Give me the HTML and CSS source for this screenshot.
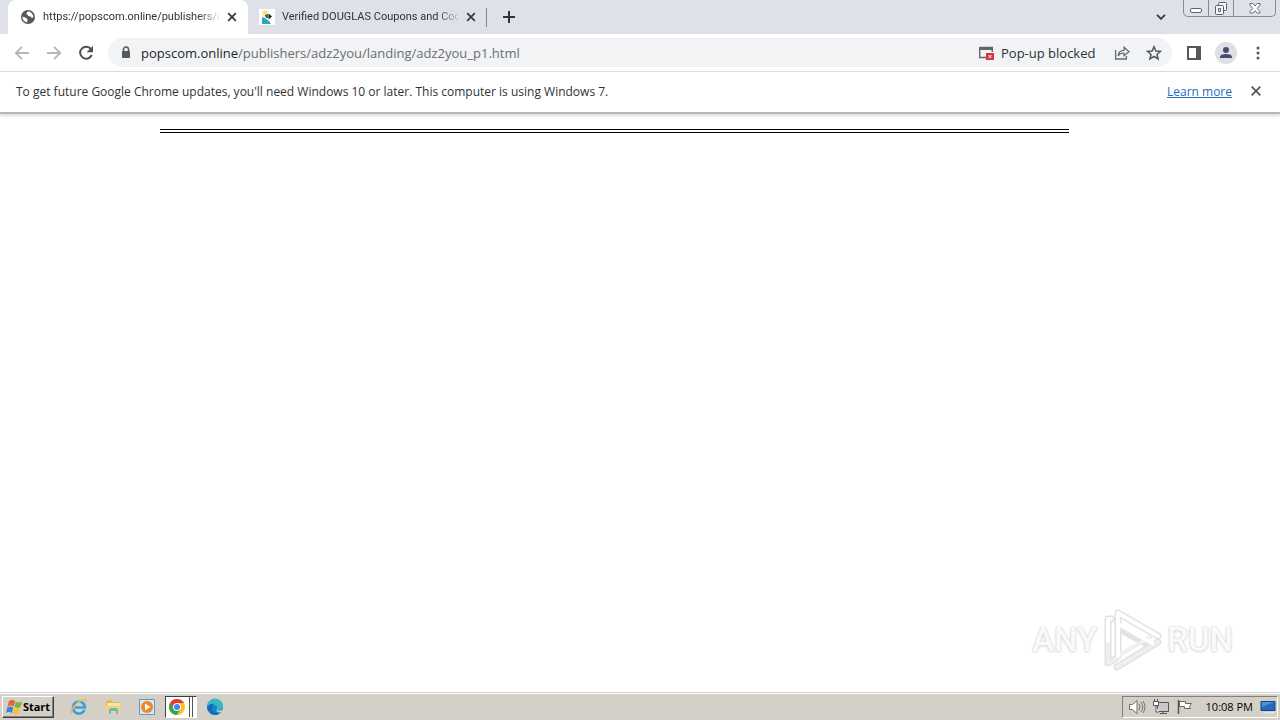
FILE: index.html
```html
<!DOCTYPE html>
<html lang="en">
<head>
<meta charset="utf-8">
<meta name="viewport" content="width=device-width, initial-scale=1">
<title>popscom.online</title>
<link rel="stylesheet" href="styles.css">
</head>
<body>
<div class="desktop">
  <header class="tabstrip">
    <div class="tab tab-active">
      <svg class="icon16" viewBox="0 0 16 16"><circle cx="8" cy="8" r="7" fill="#54575b"/><path d="M2.300 7.500l3.500 1.200 1.600 1.600v3.200C4.500 13 2.300 11 2.300 7.500zM7.500 2.500c3 0 5.500 2 6 5.500l-1.500 1-1.500-1.500-2.500-.5V6L6.200 5z" fill="#fff"/></svg>
      <span class="tab-title">https://popscom.online/publishers/a</span>
      <button class="tab-close" aria-label="Close tab"><svg viewBox="0 0 10 10"><path d="M1.200 1.200l7.600 7.600M8.800 1.200L1.200 8.800" stroke="#35383c" stroke-width="1.700"/></svg></button>
    </div>
    <div class="tab">
      <svg class="icon16" viewBox="0 0 16 16"><path fill="#fff" d="M0 0h16v16H0z"/><path d="M3 3q3-4 6 0l-1 4-3 1z" fill="#f1e48e"/><path d="M3 8l3 1 4 3 2 3H3z" fill="#28aab1"/><path d="M6 6l3-1v4H7z" fill="#52525a"/><path d="M9.500 4.500l3.500 3-3.500 3z" fill="#171c24"/></svg>
      <span class="tab-title">Verified DOUGLAS Coupons and Cod</span>
      <button class="tab-close" aria-label="Close tab"><svg viewBox="0 0 10 10"><path d="M1.200 1.200l7.600 7.600M8.800 1.200L1.200 8.800" stroke="#35383c" stroke-width="1.700"/></svg></button>
    </div>
    <button class="new-tab" aria-label="New tab"><svg viewBox="0 0 12 12"><path d="M6 0v12M0 6h12" stroke="#303338" stroke-width="2"/></svg></button>
    <button class="tab-search" aria-label="Search tabs"><svg viewBox="0 0 10 6"><path d="M1 .8l4 4 4-4" fill="none" stroke="#35383c" stroke-width="1.800"/></svg></button>
    <div class="caption">
      <button class="cap" aria-label="Minimize"><svg width="12" height="17" viewBox="0 0 12 17"><rect x=".5" y="8.500" width="11" height="4" rx="1.500" fill="#fff" stroke="#5c6070"/></svg></button>
      <button class="cap" aria-label="Restore"><svg width="14" height="17" viewBox="0 0 14 17"><rect x="4.500" y="2.500" width="8" height="8" rx="1" fill="#f4f5f7" stroke="#5c6070"/><rect x="1.500" y="5.500" width="8" height="9" rx="1" fill="#f4f5f7" stroke="#5c6070"/><path d="M4.500 8.500h2v3h-2z" fill="none" stroke="#5c6070"/></svg></button>
      <button class="cap cap-close" aria-label="Close"><svg width="12" height="17" viewBox="0 0 12 17"><path d="M1 3.500h3l2 2.500 2-2.500h3v1.500L8.300 8.500 11 11.500V13H8L6 10.700 4 13H1v-1.500l2.700-3L1 5z" fill="#fff" stroke="#6b6f7d"/></svg></button>
    </div>
  </header>

  <nav class="toolbar">
    <button class="nav-btn" aria-label="Back"><svg viewBox="0 0 16 16"><path d="M15 8H2M8 1.800L1.800 8 8 14.200" fill="none" stroke="#b4b6b9" stroke-width="1.800"/></svg></button>
    <button class="nav-btn" aria-label="Forward"><svg viewBox="0 0 16 16"><path d="M1 8h13M8 1.800L14.200 8 8 14.200" fill="none" stroke="#b4b6b9" stroke-width="1.800"/></svg></button>
    <button class="nav-btn" aria-label="Reload"><svg viewBox="0 0 16 16"><path d="M13 4.200A6 6 0 1 0 13.700 10" fill="none" stroke="#4f5256" stroke-width="2"/><path d="M15 .8v6.400H8.600z" fill="#4f5256"/></svg></button>
    <div class="omnibox">
      <svg class="lock" viewBox="0 0 10 13"><path d="M2.500 6V3.500a2.500 2.500 0 0 1 5 0V6" fill="none" stroke="#54575b" stroke-width="1.500"/><rect x="1" y="5" width="8" height="7" rx="1" fill="#54575b"/></svg>
      <a class="url" href="#page"><span class="host">popscom.online</span>/publishers/adz2you/landing/adz2you_p1.html</a>
      <button class="popup"><svg class="icon16" viewBox="0 0 16 16"><path d="M1.700 2.500h12.600V7M8 12.500H1.700v-10" fill="none" stroke="#62656a" stroke-width="1.400"/><path d="M1 2h14v3H1z" fill="#62656a"/><path d="M8 8h8v7H8z" fill="#d4373b"/><path d="M10.500 10l3 3M13.500 10l-3 3" stroke="#fff"/></svg>Pop-up blocked</button>
      <button class="omni-btn" aria-label="Share"><svg class="icon16" viewBox="0 0 16 16"><path d="M1.600 5v9h10.800v-3" fill="none" stroke="#66696d" stroke-width="1.300"/><path d="M4 11c.5-4 2.500-5.500 6-5.600V2.200L15 6.700l-5 4V8C7.500 7.900 5.500 8.500 4 11z" fill="none" stroke="#66696d" stroke-width="1.200"/></svg></button>
      <button class="omni-btn" aria-label="Bookmark this tab"><svg class="icon16" viewBox="0 0 16 16"><path d="M8 1.700l1.900 4.300 4.600.4-3.500 3 1.100 4.600L8 11.500 3.900 14 5 9.400l-3.500-3L6.100 6z" fill="none" stroke="#54575b" stroke-width="1.500"/></svg></button>
    </div>
    <button class="side-btn" aria-label="Side panel"><svg class="icon16" viewBox="0 0 16 16"><rect x="2" y="2" width="12" height="12" fill="none" stroke="#54575b" stroke-width="2"/><path d="M10 2h5v12h-5z" fill="#54575b"/></svg></button>
    <button class="avatar" aria-label="Profile"><svg viewBox="0 0 22 22"><circle cx="11" cy="11" r="11" fill="#dde0e6"/><circle cx="11" cy="8" r="3" fill="#464f68"/><path d="M5 16v-1q0-3 6-3t6 3v1z" fill="#464f68"/></svg></button>
    <button class="menu-btn" aria-label="Menu"><svg viewBox="0 0 4 14"><circle cx="2" cy="2" r="1.500" fill="#54575b"/><circle cx="2" cy="7" r="1.500" fill="#54575b"/><circle cx="2" cy="12" r="1.500" fill="#54575b"/></svg></button>
  </nav>

  <aside class="infobar">
    <p class="info-text">To get future Google Chrome updates, you'll need Windows 10 or later. This computer is using Windows 7.</p>
    <a class="learn" href="#learn">Learn more</a>
    <button class="info-close" aria-label="Dismiss"><svg viewBox="0 0 10 10"><path d="M.7.7l8.600 8.600M9.300.7L.7 9.300" stroke="#54575b" stroke-width="1.800"/></svg></button>
  </aside>

  <main class="page" id="page">
    <hr class="rule">
    <div class="watermark">
      <span>ANY</span>
      <svg viewBox="0 0 60 64"><g fill="none" stroke-linejoin="round" stroke-linecap="round"><g stroke="#e2e2e2" stroke-width="7"><path d="M16 5v43M16 5l40 23M16 20l32 18M9 11H6v44l7-4M15 59l41-25"/></g><g stroke="#fff" stroke-width="4"><path d="M9 11H6v44l7-4M15 59l41-25M16 48l32-19" stroke="#efefef"/><path d="M16 48V5l40 23M16 16l34 19M9 11H6v22"/></g></g></svg>
      <span>RUN</span>
    </div>
  </main>

  <footer class="taskbar">
    <button class="start"><svg viewBox="0 0 17 16"><path d="M3 2q3-2 6 0L7.500 7.500q-3-2-6 0z" fill="#e8642c"/><path d="M9.500 2.500q3 2 6.500 0L14.500 8q-3 2-6 0z" fill="#79b63b"/><path d="M1.200 8.500q3-2 6 0L6 14q-3-2-6 0z" fill="#3d83d6"/><path d="M8.200 9q3 2 6 0L13 14.500q-3 2-6 0z" fill="#f4c52c"/></svg>Start</button>
    <button class="task" aria-label="Internet Explorer"><svg viewBox="0 0 18 18"><path d="M14.500 12A6 6 0 1 1 15 9.500H5" fill="none" stroke="#3aa0de" stroke-width="2.600"/><path d="M1.500 16C-.5 13 5 5 12 2q5-2 4 2" fill="none" stroke="#e9bd48" stroke-width="1.400"/></svg></button>
    <button class="task" aria-label="Explorer"><svg viewBox="0 0 18 18"><path d="M2 3l5-1 1 2h7v10H2z" fill="#e0b84c"/><path d="M3 5h13v7H3z" fill="#f8e59b"/><path d="M2 8h14l1 7H2z" fill="#f1d374"/><path d="M5 16v-4q0-2 2-2h5q2 0 2 2v4h-2v-3H7v3z" fill="#67b6d8"/></svg></button>
    <button class="task" aria-label="Media Player"><svg viewBox="0 0 18 18"><path d="M1.500 1.500h15v15h-15z" fill="#d6e7f5" stroke="#639ac4"/><circle cx="9" cy="9" r="6" fill="#f08720"/><path d="M7 5.500v7L12.500 9z" fill="#fff"/></svg></button>
    <button class="task chrome" aria-label="Google Chrome"><svg viewBox="0 0 18 18"><circle cx="9" cy="9" r="8" fill="#fbc116"/><path d="M2.070 5L5.500 11 9 9V5h6.930A8 8 0 0 0 2.070 5z" fill="#e33b2e"/><path d="M2.070 5A8 8 0 0 0 9 17l3.500-6H5.500z" fill="#2da94f"/><circle cx="9" cy="9" r="4" fill="#fff"/><circle cx="9" cy="9" r="3" fill="#4285f4"/></svg></button>
    <button class="task" aria-label="Edge"><svg viewBox="0 0 18 18"><circle cx="9" cy="9" r="8" fill="#1685cf"/><path d="M1 9A8 8 0 0 1 17 8q0 4-4 4-3 0-2-2 .5-3-3-3-5 0-7 2z" fill="#35b8c4"/><path d="M1 9q3-4 7-3-3 3-1 7 2 3 7 2Q9 19 4 15 1 12.500 1 9z" fill="#1769b5"/><path d="M10.500 11q0 3 6 1-1 2-2.500 2.500-4 0-3.500-3.500z" fill="#d4d0c8"/></svg></button>
    <div class="tray">
      <svg viewBox="0 0 18 18"><path d="M1.500 6.500h3L9 2.500v13l-4.500-4h-3z" fill="#fff" stroke="#6e6e6e"/><path d="M11 6q2 3 0 6M13 4q3.500 5 0 10M15 3q4 6 0 12" fill="none" stroke="#777"/></svg>
      <svg viewBox="0 0 18 18"><path d="M5.500 4.500h11v9h-11z" fill="#c9c9c9" stroke="#555"/><path d="M8 15.500h7M11 13v3" stroke="#555"/><path d="M2.500 1v3M5.500 1v3M1.500 3.500h5v4h-5zM4 8v6h3" fill="#fff" stroke="#555"/></svg>
      <svg viewBox="0 0 18 18"><path d="M3.500 3.500h6v2h6l-2 3 1 2h-6v-2h-5z" fill="#fff" stroke="#666"/><path d="M2.500 2v14" stroke="#555" stroke-width="1.500"/></svg>
      <time class="clock">10:08 PM</time>
      <svg viewBox="0 0 18 18"><path d="M2 3.500h14v9H2z" fill="#2869bd" stroke="#174683"/><path d="M3 4h12L3 9z" fill="#4b94de"/><path d="M4 14h11v1.500H4z" fill="#dce6ef"/></svg>
    </div>
  </footer>
</div>
</body>
</html>
```
FILE: styles.css
```css
* { box-sizing: border-box; }
body { margin: 0; font-family: "Open Sans", "Noto Sans", sans-serif; font-size: 12px; color: #2f3236; background: #fff; }
button { border: 0; padding: 0; background: none; font: inherit; color: inherit; display: flex; align-items: center; justify-content: center; flex: none; }
svg { display: block; flex: none; }
.icon16 { width: 16px; height: 16px; }
.desktop { min-height: 100vh; display: flex; flex-direction: column; }

.tabstrip { display: flex; height: 34px; padding-left: 8px; background: #dee1e8; }
.tab { display: flex; align-items: center; width: 239px; height: 34px; padding: 0 10px 0 11px; gap: 7px; font: 11px/16px "Roboto", sans-serif; }
.tab-active { width: 240px; padding-left: 12px; background: #fff; border-radius: 8px 8px 0 0; }
.tab-title { flex: 1; min-width: 0; white-space: nowrap; mask-image: linear-gradient(to right, #000 88%, rgba(0, 0, 0, .15)); }
.tab-close { width: 12px; height: 16px; }
.tab-close svg { width: 10px; height: 10px; }
.tab + .tab { background: linear-gradient(#84888f, #84888f) right center / 1px 19px no-repeat; }
.new-tab { width: 44px; height: 34px; }
.new-tab svg { width: 12px; height: 12px; }
.tab-search { width: 28px; height: 34px; margin-left: auto; }
.tab-search svg { width: 10px; height: 6px; }
.caption { display: flex; height: 17px; margin: 0 4px 0 8px; border: 1px solid #858b98; border-top: 0; border-radius: 0 0 5px 5px; }
.cap { width: 25px; border-right: 1px solid #858b98; }
.cap-close { width: 41px; border: 0; }

.toolbar { display: flex; align-items: center; height: 38px; padding: 0 10px 0 6px; border-bottom: 1px solid #d9dbde; }
.nav-btn { width: 32px; height: 32px; }
.nav-btn svg { width: 16px; height: 16px; }
.omnibox { display: flex; align-items: center; flex: 1; height: 29px; margin: 0 6px; padding: 0 10px 0 13px; background: #f1f3f5; border-radius: 15px; font-size: 13px; }
.lock { width: 10px; height: 13px; margin-right: 10px; }
.url { flex: 1; min-width: 0; color: #6a6e73; text-decoration: none; white-space: nowrap; overflow: hidden; }
.host { color: #24272b; }
.popup { justify-content: flex-start; width: 120px; gap: 7px; margin-right: 16px; }
.omni-btn { width: 16px; height: 28px; }
.omni-btn + .omni-btn { margin-left: 16px; }
.side-btn { width: 32px; height: 32px; }
.avatar { width: 32px; height: 32px; }
.avatar svg { width: 22px; height: 22px; }
.menu-btn { width: 24px; height: 32px; margin-left: 4px; }
.menu-btn svg { width: 4px; height: 14px; }

.infobar { display: flex; align-items: center; height: 42px; padding: 0 18px 2px 16px; border-bottom: 2px solid #b6b6b6; box-shadow: 0 2px 3px #ddd; }
.info-text { flex: 1; margin: 0; }
.learn { color: #2a6cc0; }
.info-close { width: 12px; height: 20px; margin-left: 18px; }
.info-close svg { width: 10px; height: 10px; }

.page { flex: 1; display: flex; flex-direction: column; padding: 15px 47px 20px 0; }
.rule { width: 71vw; margin: 0 0 0 12.5vw; border: 0; border-top: 4px double #000; }
.watermark { display: flex; align-items: center; gap: 5px; margin: auto 0 0 auto; font: 500 33px/64px "Roboto", sans-serif; color: #fafafa; text-shadow: 0 0 2px #c8c8c8, 0 1px 3px #ddd; }
.watermark svg { width: 60px; height: 64px; }

.taskbar { display: flex; align-items: center; height: 28px; padding: 0 2px; background: #d4d0c8; border-top: 1px solid #d4d0c8; box-shadow: inset 0 1px #fff; }
.start { width: 52px; height: 22px; margin-right: 8px; color: #000; font-size: 11px; font-weight: 700; border: 1px solid; border-color: #fff #404040 #404040 #fff; box-shadow: inset -1px -1px #808080; }
.start svg { width: 17px; height: 16px; }
.task { width: 34px; height: 22px; }
.task svg { width: 18px; height: 18px; }
.chrome { justify-content: flex-start; width: 32px; margin: 0 1px; padding-left: 2px; border: 1px solid; border-color: #404040 #fff #fff #404040; background: linear-gradient(90deg, #fff 23px, #555 23px 24px, #fff 24px 26px, #555 26px 27px, #fff 27px); }
.tray { display: flex; align-items: center; height: 22px; margin-left: auto; padding: 0 0 0 5px; gap: 6px; color: #000; border: 1px solid; border-color: #808080 #fff #fff #808080; }
.tray svg { width: 18px; height: 18px; }
.clock { margin-left: 6px; font-size: 11px; }
```
